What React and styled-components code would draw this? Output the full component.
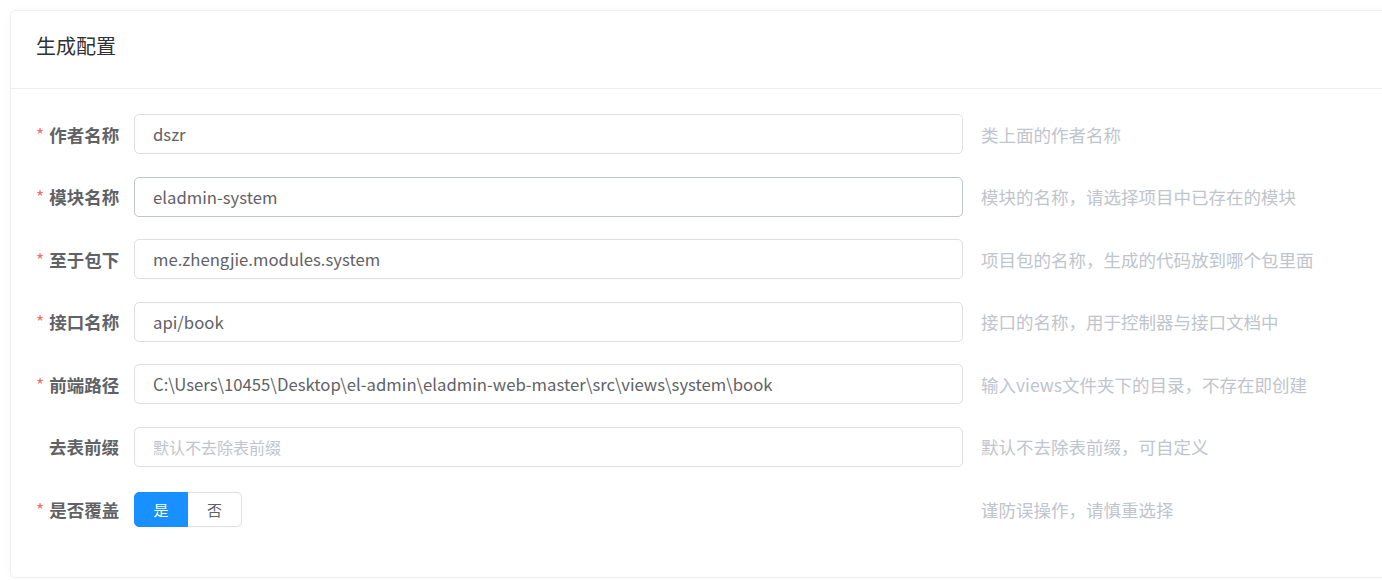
import React from "react";
import styled, { createGlobalStyle } from "styled-components";

const GlobalStyle = createGlobalStyle`
    html, body {
        margin: 0;
        padding: 0;
        background: #fff;
        overflow: hidden;
    }
    body {
        font-family: "Noto Sans CJK SC", "Noto Sans", sans-serif;
    }
`;

const Page = styled.div`
    padding: 10px 0 0 10px;
    width: 1372px;
    overflow: hidden;
`;

const Card = styled.div`
    width: 1420px;
    border: 1px solid #ebeef5;
    border-radius: 5px;
    background: #fff;
    box-shadow: 0 2px 12px 0 rgba(0, 0, 0, 0.03);
`;

const CardHeader = styled.div`
    padding: 0 25px 8px;
    height: 78px;
    box-sizing: border-box;
    display: flex;
    align-items: center;
    border-bottom: 1px solid #ebeef5;
    font-size: 20px;
    color: #303133;
`;

const CardBody = styled.div`
    padding: 25px;
`;

const FormItem = styled.div`
    display: flex;
    align-items: center;
    height: 40px;
    margin-bottom: 22.5px;
`;

const Label = styled.label`
    width: 98px;
    box-sizing: border-box;
    padding-right: 15px;
    text-align: right;
    font-size: 17.5px;
    font-weight: 700;
    color: #606266;
    white-space: nowrap;
    &::before {
        content: ${p => (p.$required ? '"*"' : '""')};
        color: #f56c6c;
        margin-right: 5px;
        font-weight: 400;
    }
`;

const Input = styled.input`
    width: 829px;
    height: 40px;
    box-sizing: border-box;
    border: 1px solid ${p => (p.$hover ? "#c0c4cc" : "#dcdfe6")};
    border-radius: 5px;
    padding: 0 18px;
    font-family: inherit;
    font-size: 16.7px;
    color: #606266;
    outline: none;
    background: #fff;
    &::placeholder {
        color: #c0c4cc;
        font-size: 16px;
    }
`;

const Help = styled.span`
    margin-left: 18px;
    font-size: 17.5px;
    color: #c0c4cc;
    white-space: nowrap;
`;

const RadioGroup = styled.div`
    display: flex;
    width: 829px;
`;

const RadioButton = styled.button`
    width: 54px;
    height: 35px;
    box-sizing: border-box;
    border: 1px solid ${p => (p.$active ? "#1890ff" : "#dcdfe6")};
    border-left-width: ${p => (p.$first ? "1px" : "0")};
    border-radius: ${p => (p.$first ? "5px 0 0 5px" : "0 5px 5px 0")};
    background: ${p => (p.$active ? "#1890ff" : "#fff")};
    color: ${p => (p.$active ? "#fff" : "#606266")};
    font-family: inherit;
    font-size: 15px;
    padding: 0;
    cursor: pointer;
`;

const rows = [
    { label: "作者名称", value: "dszr", help: "类上面的作者名称", required: true },
    { label: "模块名称", value: "eladmin-system", help: "模块的名称，请选择项目中已存在的模块", required: true, hover: true },
    { label: "至于包下", value: "me.zhengjie.modules.system", help: "项目包的名称，生成的代码放到哪个包里面", required: true },
    { label: "接口名称", value: "api/book", help: "接口的名称，用于控制器与接口文档中", required: true },
    { label: "前端路径", value: "C:\\Users\\10455\\Desktop\\el-admin\\eladmin-web-master\\src\\views\\system\\book", help: "输入views文件夹下的目录，不存在即创建", required: true },
    { label: "去表前缀", value: "", placeholder: "默认不去除表前缀", help: "默认不去除表前缀，可自定义", required: false },
];

export default function App() {
    const [cover, setCover] = React.useState(true);

    return (
        <Page>
            <GlobalStyle />
            <Card>
                <CardHeader>生成配置</CardHeader>
                <CardBody>
                    {rows.map(r => (
                        <FormItem key={r.label}>
                            <Label $required={r.required}>{r.label}</Label>
                            <Input
                                defaultValue={r.value}
                                placeholder={r.placeholder}
                                $hover={r.hover}
                            />
                            <Help>{r.help}</Help>
                        </FormItem>
                    ))}
                    <FormItem>
                        <Label $required>是否覆盖</Label>
                        <RadioGroup>
                            <RadioButton $first $active={cover} onClick={() => setCover(true)}>是</RadioButton>
                            <RadioButton $active={!cover} onClick={() => setCover(false)}>否</RadioButton>
                        </RadioGroup>
                        <Help>谨防误操作，请慎重选择</Help>
                    </FormItem>
                </CardBody>
            </Card>
        </Page>
    );
}
